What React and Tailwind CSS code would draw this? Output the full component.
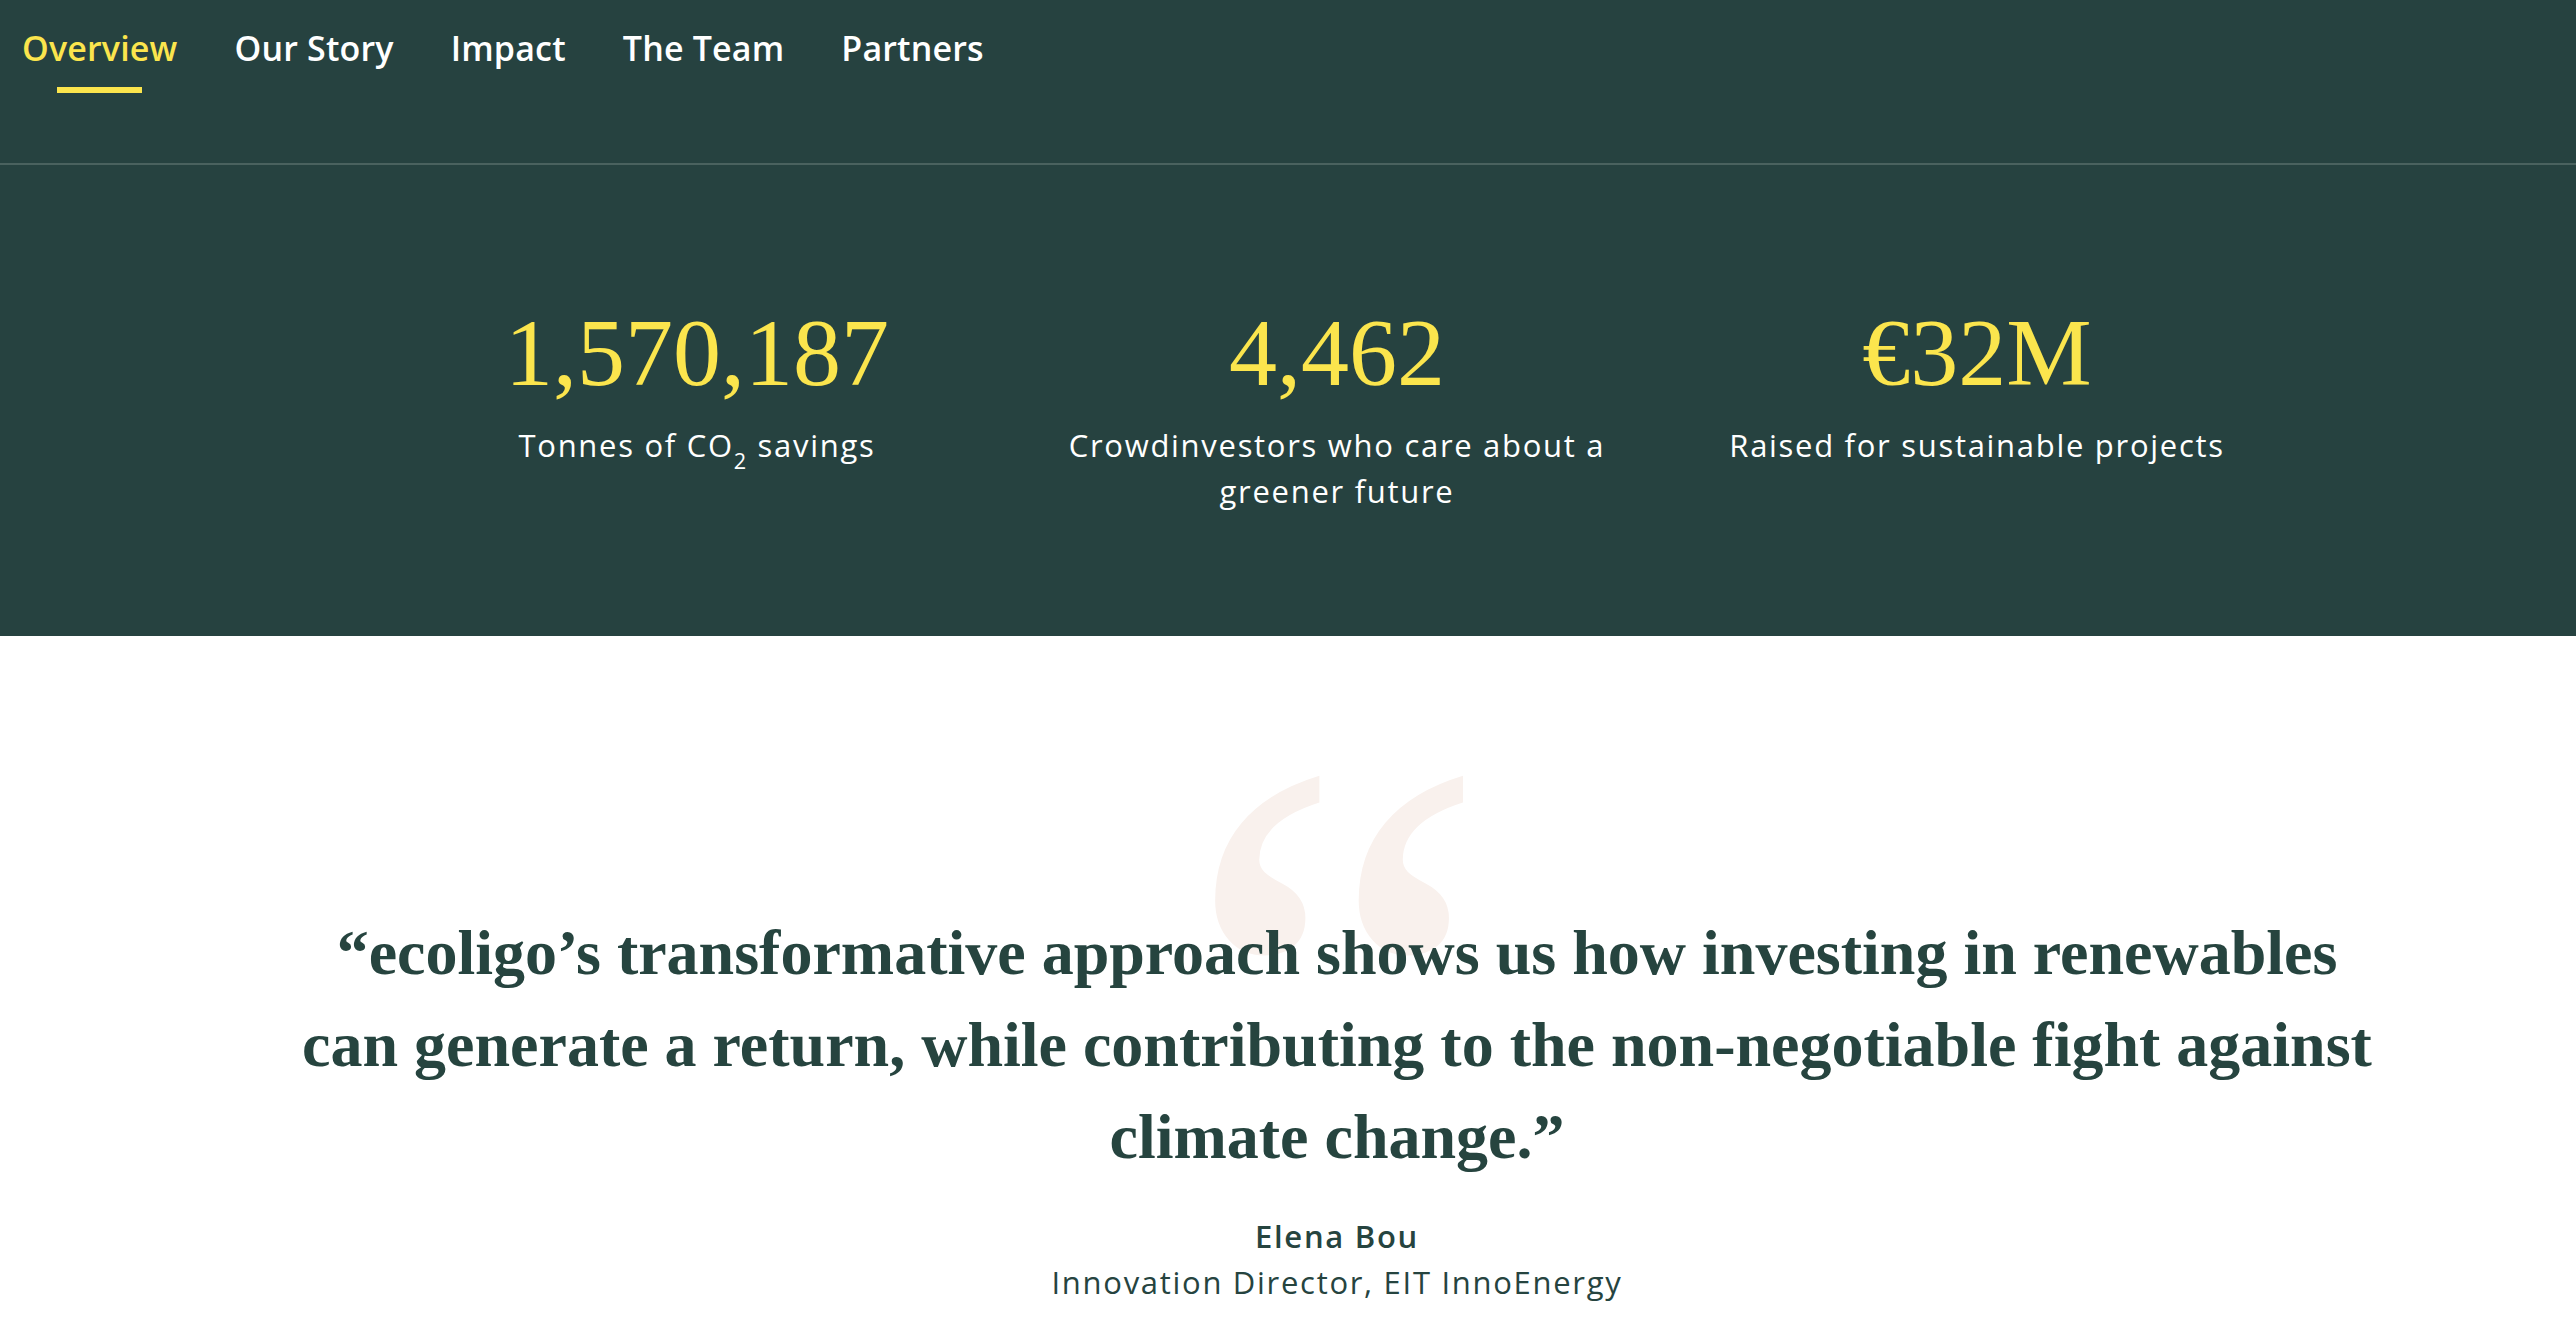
import React from "react";

const navItems = ["Overview", "Our Story", "Impact", "The Team", "Partners"];

const stats = [
  { value: "1,570,187", label: <>Tonnes of CO<sub className="text-[0.7em] align-[-0.3em] leading-none">2</sub> savings</> },
  { value: "4,462", label: "Crowdinvestors who care about a greener future" },
  { value: "€32M", label: "Raised for sustainable projects" },
];

const sans = "font-['Open_Sans','Noto_Sans',sans-serif]";
const serif = "font-['Liberation_Serif','Times_New_Roman',serif]";

export default function App() {
  const active = "Overview";

  return (
    <div className="min-h-screen bg-white">
      {/* Tabs */}
      <header className="h-[165px] bg-[#264240] border-b-2 border-[#4a625f]">
        <nav className={`flex gap-[57px] pl-[22px] pt-[31px] ${sans}`}>
          {navItems.map((item) => (
            <a key={item} href="#" className="flex flex-col">
              <span
                className={`text-[34px] leading-none font-semibold tracking-[0.005em] ${
                  item === active ? "text-[#fbe54d]" : "text-white"
                }`}
              >
                {item}
              </span>
              {item === active && <span className="mt-[22px] mx-auto w-[85px] h-[6px] bg-[#fbe54d]" />}
            </a>
          ))}
        </nav>
      </header>

      {/* Stats */}
      <section className="bg-[#264240] pt-[130px] pb-[122px] pl-[98px]">
        <div className="flex justify-center">
          {stats.map((s) => (
            <div key={s.value} className="w-[640px] flex flex-col items-center text-center">
              <div className={`${serif} text-[96px] leading-[115px] text-[#fbe54d]`}>{s.value}</div>
              <p className={`${sans} mt-[12px] max-w-[580px] text-[31px] leading-[46px] tracking-[0.055em] text-white`}>
                {s.label}
              </p>
            </div>
          ))}
        </div>
      </section>

      {/* Testimonial */}
      <section className="pl-[98px]">
        <div className="relative flex flex-col items-center pt-[271px]">
          <span
            aria-hidden="true"
            className={`absolute top-[20px] left-1/2 -translate-x-1/2 ${serif} text-[700px] leading-none text-[#f9f1ed] select-none`}
          >
            “
          </span>
          <blockquote
            className={`relative max-w-[2090px] text-center ${serif} font-bold text-[64px] leading-[92px] text-[#26443f]`}
          >
            “ecoligo’s transformative approach shows us how investing in renewables can generate a return, while
            contributing to the non-negotiable fight against climate change.”
          </blockquote>
          <div className={`relative mt-[30px] text-center text-[#26443f] ${sans} text-[31px] leading-[46px] tracking-[0.055em]`}>
            <p className="font-semibold">Elena Bou</p>
            <p>Innovation Director, EIT InnoEnergy</p>
          </div>
        </div>
      </section>
    </div>
  );
}
